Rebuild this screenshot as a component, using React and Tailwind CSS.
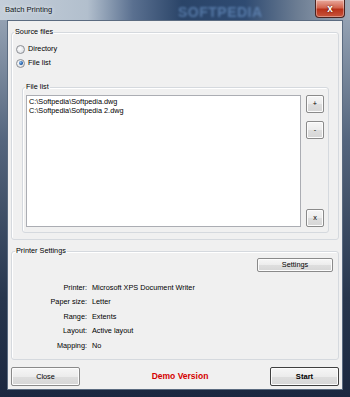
import React from 'react';

const font = { fontFamily: '"Liberation Sans", Arial, sans-serif' };

function WinButton({ children, className = '', strong = false }) {
  return (
    <button
      className={`flex items-center justify-center rounded-[2px] border ${
        strong ? 'border-[#5a5a5a] font-bold' : 'border-[#8a8a8a]'
      } bg-[linear-gradient(180deg,#f6f6f6_0%,#ececec_50%,#dedede_51%,#d6d6d6_100%)] text-[7.3px] leading-none text-black shadow-[inset_0_0_0_1px_#fcfcfc] ${className}`}
    >
      {children}
    </button>
  );
}

function Radio({ checked, label }) {
  return (
    <label className="flex h-[12px] items-center gap-[3px]">
      <span className="flex h-[9px] w-[9px] items-center justify-center rounded-full border border-[#8c8f94] bg-[radial-gradient(circle_at_40%_40%,#ffffff_0%,#e4e6e9_60%,#cdd1d6_100%)]">
        {checked && (
          <span className="h-[4px] w-[4px] rounded-full bg-[radial-gradient(circle_at_35%_35%,#8ec0f0_0%,#1c5aa6_60%,#0d3a75_100%)]" />
        )}
      </span>
      <span className="text-[7.3px] text-black">{label}</span>
    </label>
  );
}

function Group({ title, className = '', legendClass = '', children }) {
  return (
    <fieldset className={`rounded-[3px] border border-[#d5d9de] shadow-[inset_1px_1px_0_#ffffff] ${className}`}>
      <legend className={`px-[1px] text-[7.3px] leading-[10px] text-black ${legendClass}`}>{title}</legend>
      {children}
    </fieldset>
  );
}

const rows = [
  ['Printer:', 'Microsoft XPS Document Writer'],
  ['Paper size:', 'Letter'],
  ['Range:', 'Extents'],
  ['Layout:', 'Active layout'],
  ['Mapping:', 'No'],
];

export default function App() {
  return (
    <div
      className="relative flex h-[397px] w-[350px] flex-col overflow-hidden bg-[linear-gradient(180deg,#9eabbb_0%,#55667e_35%,#27364d_75%,#1b2840_100%)]"
      style={font}
    >
      {/* title bar */}
      <div className="relative flex h-[20px] shrink-0 items-center bg-[linear-gradient(90deg,#c4ced9_0%,#b2bfcd_25%,#5a7090_38%,#2a4468_52%,#2f4b72_70%,#6c7d93_85%,#9ea9b7_100%)] pl-[5px]">
        <span className="text-[7.6px] text-[#0f1620] [text-shadow:0_0_4px_#ffffff]">Batch Printing</span>
        <span className="absolute left-[178px] top-[2px] text-[14px] font-bold tracking-[0.5px] text-[#6f98cc] opacity-60 blur-[1.2px]">
          SOFTPEDIA
        </span>
        <div className="absolute right-[5px] top-0 flex h-[18px] w-[30px] items-center justify-center rounded-b-[4px] border border-t-0 border-[#4a2320] bg-[linear-gradient(180deg,#e9a99c_0%,#d2654f_45%,#b9321a_55%,#c8553c_100%)] shadow-[inset_0_0_0_1px_rgba(255,255,255,0.35)]">
          <span className="text-[10px] font-bold leading-none text-white [text-shadow:0_0_2px_#3a0a00]">x</span>
        </div>
      </div>

      {/* client area */}
      <div className="mx-[7px] mb-[7px] flex flex-1 flex-col border border-[#5b6b80] bg-[#f0f0f0] px-[3px] pb-[3px]">
        <Group title="Source files" className="mt-[6px]" legendClass="ml-[2px]">
          <div className="flex flex-col gap-[2px] pl-[4px] pt-[6px]">
            <Radio label="Directory" />
            <Radio checked label="File list" />
          </div>

          <Group title="File list" className="mb-[6px] ml-[10px] mr-[9px] mt-[13px]" legendClass="ml-[2px]">
            <div className="flex pb-[5px] pl-[3px] pr-[4px] pt-[3px]">
              <div className="h-[132px] flex-1 border border-[#abadb3] bg-white px-[2px] py-[2px] text-[7.3px] leading-[8.5px] text-black">
                <div>C:\Softpedia\Softpedia.dwg</div>
                <div>C:\Softpedia\Softpedia 2.dwg</div>
              </div>
              <div className="ml-[5px] flex w-[18px] flex-col justify-between">
                <div className="flex flex-col gap-[8px]">
                  <WinButton className="h-[18px] w-[18px]">+</WinButton>
                  <WinButton className="h-[18px] w-[18px]">-</WinButton>
                </div>
                <WinButton className="h-[18px] w-[18px]">x</WinButton>
              </div>
            </div>
          </Group>
        </Group>

        <Group title="Printer Settings" className="mt-[6px]" legendClass="ml-[3px]">
          <div className="flex justify-end pr-[5px] pt-[2px]">
            <WinButton className="h-[14px] w-[76px]">Settings</WinButton>
          </div>
          <div className="mt-[9px] flex flex-col pb-[5px]">
            {rows.map(([k, v]) => (
              <div key={k} className="flex h-[14.5px] items-center text-[7.3px] text-black">
                <span className="w-[75px] text-right">{k}</span>
                <span className="ml-[5px]">{v}</span>
              </div>
            ))}
          </div>
        </Group>

        <div className="mt-auto flex items-center justify-between">
          <WinButton className="h-[19px] w-[69px]">Close</WinButton>
          <span className="ml-[10px] text-[8.5px] font-bold text-[#d40000]">Demo Version</span>
          <WinButton strong className="h-[19px] w-[69px] border-[#404040] text-[7.6px]">
            Start
          </WinButton>
        </div>
      </div>
    </div>
  );
}
